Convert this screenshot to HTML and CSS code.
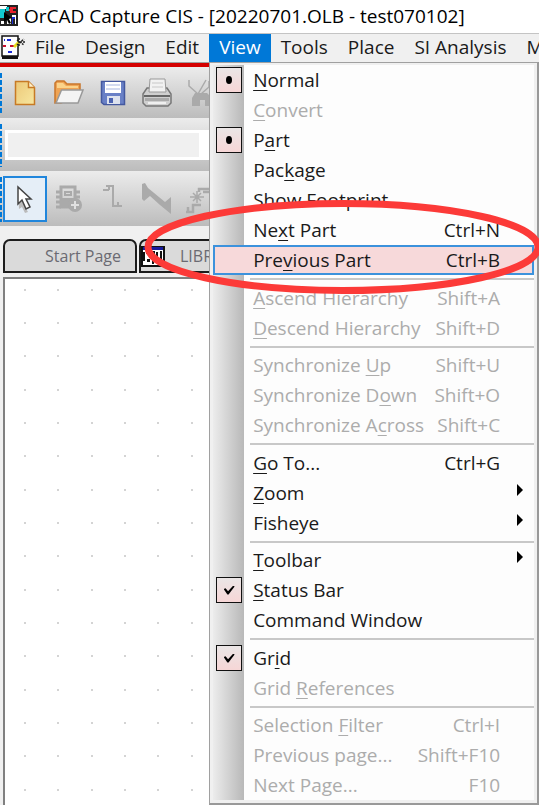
FILE: index.html
```html
<!DOCTYPE html>
<html lang="en">
<head>
<meta charset="utf-8">
<title>OrCAD Capture CIS</title>
<link rel="stylesheet" href="styles.css">
</head>
<body>
<header class="titlebar">
  <svg class="app-icon" width="18" height="21" viewBox="0 0 18 21" aria-hidden="true">
    <path fill="#222" d="M0 0h18v21H0z"/>
    <path fill="#fff" d="M0 1h7v3H0zM7 12h4v7H7zM1 16h3v3H1z"/>
    <path fill="#12c9cf" d="M0 4h5v9H0zM6 2h3v4H6z"/>
    <path fill="#e8222e" d="M10 2h6v2h-3v2h3v2h-6V6h-1V4h1z"/>
    <path fill="#fff" d="M12 10h4v9h-1v-7h-2v7h-1z"/>
    <path fill="#1b2bd6" d="M12 12h3v2h-2v5h-1z"/>
    <path fill="#000" d="M4 7l8 6-3 1 2 4-2 1-2-4-3 2z"/>
  </svg>
  <h1 class="title">OrCAD Capture CIS - [20220701.OLB - test070102]</h1>
</header>

<nav class="menubar">
  <svg class="doc-icon" width="25" height="26" viewBox="0 0 25 26" aria-hidden="true">
    <path fill="#fff" stroke="#111" stroke-width="1.5" d="M2 2h16v20H2z"/>
    <path fill="#111" d="M2 22h16v3H2z"/>
    <path stroke="#1b2bd6" stroke-width="2" d="M7 6h4M8 18h4M4 6h1"/>
    <path stroke="#c8102e" stroke-width="2" d="M3 12h3M10 12h4"/>
    <path stroke="#e8dc20" stroke-width="3" d="M14 13l5-5"/>
    <path stroke="#222" stroke-width="1.5" stroke-dasharray="2 1" d="M19 4v9M17 6l7 5M17 11l7-6M20 8h5"/>
  </svg>
  <button class="menu-title">File</button>
  <button class="menu-title">Design</button>
  <button class="menu-title">Edit</button>
  <div class="menu-anchor">
    <button class="menu-title menu-title-open" aria-expanded="true">View</button>
    <div class="menu">
      <div class="group">
        <label class="item"><input class="mark mark-dot" type="radio" name="shape" checked><span class="name"><u>N</u>ormal</span></label>
        <button class="item" disabled><span class="name"><u>C</u>onvert</span></button>
        <label class="item"><input class="mark mark-dot" type="radio" name="unit" checked><span class="name">P<u>a</u>rt</span></label>
        <button class="item"><span class="name">Pac<u>k</u>age</span></button>
        <button class="item"><span class="name">Show Footprint</span></button>
        <button class="item"><span class="name">Ne<u>x</u>t Part</span><kbd class="keys">Ctrl+N</kbd></button>
        <button class="item item-current"><span class="name">Pre<u>v</u>ious Part</span><kbd class="keys">Ctrl+B</kbd></button>
      </div>
      <div class="group">
        <button class="item" disabled><span class="name"><u>A</u>scend Hierarchy</span><kbd class="keys">Shift+A</kbd></button>
        <button class="item" disabled><span class="name"><u>D</u>escend Hierarchy</span><kbd class="keys">Shift+D</kbd></button>
      </div>
      <div class="group">
        <button class="item" disabled><span class="name">Synchronize <u>U</u>p</span><kbd class="keys">Shift+U</kbd></button>
        <button class="item" disabled><span class="name">Synchronize D<u>o</u>wn</span><kbd class="keys">Shift+O</kbd></button>
        <button class="item" disabled><span class="name">Synchronize A<u>c</u>ross</span><kbd class="keys">Shift+C</kbd></button>
      </div>
      <div class="group">
        <button class="item"><span class="name"><u>G</u>o To...</span><kbd class="keys">Ctrl+G</kbd></button>
        <button class="item item-parent"><span class="name"><u>Z</u>oom</span></button>
        <button class="item item-parent"><span class="name">Fisheye</span></button>
      </div>
      <div class="group">
        <button class="item item-parent"><span class="name"><u>T</u>oolbar</span></button>
        <label class="item"><input class="mark mark-check" type="checkbox" checked><span class="name"><u>S</u>tatus Bar</span></label>
        <button class="item"><span class="name">Command Window</span></button>
      </div>
      <div class="group">
        <label class="item"><input class="mark mark-check" type="checkbox" checked><span class="name">Gr<u>i</u>d</span></label>
        <button class="item" disabled><span class="name">Grid <u>R</u>eferences</span></button>
      </div>
      <div class="group">
        <button class="item" disabled><span class="name">Selection <u>F</u>ilter</span><kbd class="keys">Ctrl+I</kbd></button>
        <button class="item" disabled><span class="name">Previous page...</span><kbd class="keys">Shift+F10</kbd></button>
        <button class="item" disabled><span class="name">Next Page...</span><kbd class="keys">F10</kbd></button>
      </div>
    </div>
  </div>
  <button class="menu-title">Tools</button>
  <button class="menu-title">Place</button>
  <button class="menu-title">SI Analysis</button>
  <button class="menu-title">Macro</button>
</nav>

<div class="toolbar toolbar-file">
  <button class="tool" aria-label="New">
    <svg width="32" height="32" viewBox="0 0 32 32"><defs><linearGradient id="paper" x2="1" y2="1"><stop stop-color="#ecc878"/><stop offset="1" stop-color="#f7e7a0"/></linearGradient></defs><path fill="url(#paper)" stroke="#c77a25" stroke-width="1.5" d="M6.500 4.500h13l6 6v17h-19z"/><path fill="#fff0c8" stroke="#c77a25" stroke-width="1.500" d="M19.500 4.500v6h6"/></svg>
  </button>
  <button class="tool" aria-label="Open">
    <svg width="32" height="32" viewBox="0 0 32 32"><path fill="#efa455" stroke="#c9762a" stroke-width="1.500" d="M2 26V6l2-2h7l3 3h13v10L8 26z"/><path fill="#fbd38a" d="M4 6h6l3 3h12v2H4z"/><path fill="#f4f4f4" stroke="#999" stroke-width="1.500" d="M8.500 13H30l-5 13H3z"/></svg>
  </button>
  <button class="tool" aria-label="Save">
    <svg width="32" height="32" viewBox="0 0 32 32"><path fill="#6980c6" stroke="#44589f" stroke-width="1.500" d="M4.500 4.500h23v23H7l-2.500-2z"/><path fill="#fff" d="M8 5h16v11H8z"/><path fill="#d3daf0" d="M9 7h14v2H9zM9 11h14v2H9z"/><path fill="#dde2ee" d="M10 19h13v8H10z"/><path fill="#4b62b0" d="M12 21h4v5h-4z"/></svg>
  </button>
  <button class="tool" aria-label="Print">
    <svg width="34" height="32" viewBox="0 0 34 32"><path fill="#cfcfcf" stroke="#777" stroke-width="1.500" d="M3 17l4-6h20l4 6v9l-3 3H6l-3-3z"/><path fill="#f2f2f2" stroke="#999" d="M10 2h15l1 13H9z"/><path fill="#ddd" d="M12 5h11v2H12zM12 9h11v2H12z"/><path fill="none" stroke="#666" stroke-width="2" d="M4 19h26"/><path fill="#aaa" d="M5 21h24v3H5z"/><path fill="#f0f0f0" d="M8 25h18v2H8z"/></svg>
  </button>
  <button class="tool" aria-label="Cut">
    <svg width="32" height="32" viewBox="0 0 32 32"><path fill="none" stroke="#aaa" stroke-width="1.500" d="M4 3v6l9 8M21 3l-8 14M24 4v6l-8 7"/><path fill="#aaa" d="M10 16h12l5 5v8h-7v-6h-5v6H7v-8z"/></svg>
  </button>
</div>

<div class="toolbar toolbar-search">
  <div class="combo"><input class="combo-field" type="text" aria-label="Part name"></div>
</div>

<div class="toolbar toolbar-draw">
  <button class="tool tool-active" aria-label="Select">
    <svg width="32" height="32" viewBox="0 0 32 32"><path fill="#bbb" d="M9 8l12 15-5 1 3 5-3 1-3-6-3 2z"/><path fill="#fff" stroke="#444" stroke-width="1.500" d="M9 4v17l4-4 4 9 4-2-4-8h5z"/></svg>
  </button>
  <button class="tool" aria-label="Place part">
    <svg width="32" height="32" viewBox="0 0 32 32"><g fill="none" stroke="#aaa"><path stroke-width="3" d="M8 4h14v20H8z"/><path stroke-width="3" d="M3 9h5M3 14h5M3 19h5M3 24h5M22 9h5M22 14h5"/><path stroke-width="2" d="M12 9h6v3h-6z"/></g><path fill="#aaa" d="M8 15h14v9H8z"/><circle cx="22" cy="22" r="7" fill="#aaa"/><path stroke="#e0e0e0" stroke-width="2" d="M22 18v8M18 22h8"/></svg>
  </button>
  <button class="tool" aria-label="Place wire">
    <svg width="32" height="32" viewBox="0 0 32 32"><path fill="none" stroke="#aaa" stroke-width="2" d="M6 7h6M12 3v4M9 3h7v20h9M21 19v5"/></svg>
  </button>
  <button class="tool" aria-label="Place net group">
    <svg width="32" height="32" viewBox="0 0 32 32"><path fill="#aaa" d="M1 1l3-1 3 5 17 14 6-5v17L19 22 9 13l-6 5-2-2z"/></svg>
  </button>
  <button class="tool" aria-label="Auto connect">
    <svg width="32" height="32" viewBox="0 0 32 32"><path fill="none" stroke="#aaa" stroke-width="2.500" d="M1 29h7v-7h8M3 29v-5M14 9V6h12M18 9h8"/><path fill="none" stroke="#aaa" stroke-width="1.500" d="M5 14h14M8 10l8 8M16 10l-8 8M12 8v12"/></svg>
  </button>
</div>

<main class="workspace">
  <div class="tabs">
    <button class="tab">Start Page</button>
    <button class="tab tab-doc">
      <svg width="24" height="21" viewBox="0 0 24 21" aria-hidden="true"><path fill="#fff" stroke="#111" stroke-width="2" d="M1 1h22v19H1z"/><path fill="#151a9c" d="M2 1h20v3H2z"/><path fill="#111" d="M5 5h9v3h-3v3H9V8H5zM2 6h2v9H2zM15 6h2v5h-2zM19 5h2v9h-2zM6 13h3v3H6zM11 13h2v5h-2z"/></svg>
      LIBRARY
    </button>
  </div>
  <div class="canvas">
    <svg class="grid" aria-hidden="true">
      <defs>
        <pattern id="dots" width="100" height="100" patternUnits="userSpaceOnUse">
          <path fill="#d4d4d4" d="M19 10h2v2h-2zM52 10h2v2h-2zM86 10h2v2h-2zM19 43h2v2h-2zM52 43h2v2h-2zM86 43h2v2h-2zM19 76h2v2h-2zM52 76h2v2h-2zM86 76h2v2h-2z"/>
        </pattern>
      </defs>
      <rect width="100%" height="100%" fill="url(#dots)"/>
    </svg>
  </div>
</main>

<svg class="callout" width="397" height="96" viewBox="0 0 397 96" aria-hidden="true">
  <ellipse cx="201" cy="48" rx="195" ry="43.500" fill="none" stroke="#fc3a38" stroke-width="7"/>
</svg>
</body>
</html>
```
FILE: styles.css
```css
* {
  box-sizing: border-box;
}

body {
  margin: 0;
  height: 100vh;
  display: flex;
  flex-direction: column;
  position: relative;
  overflow: hidden;
  background: #f0f0f0;
  color: #1a1a1a;
  font-family: "Open Sans", "Noto Sans", sans-serif;
  font-size: 19px;
}

button {
  font: inherit;
  color: inherit;
  background: none;
  border: 0;
  margin: 0;
  padding: 0;
}

.titlebar {
  flex: none;
  display: flex;
  align-items: center;
  gap: 6px;
  height: 33px;
  padding-bottom: 2px;
  background: #fff;
}

.title {
  margin: 0;
  color: #000;
  font-size: 19px;
  font-weight: 400;
  white-space: nowrap;
}

.menubar {
  flex: none;
  display: flex;
  height: 30px;
  border-top: 1px solid #c4c4c4;
  border-bottom: 1px solid #a0a0a0;
  white-space: nowrap;
}

.doc-icon {
  flex: none;
}

.menu-title {
  flex: none;
  height: 28px;
  padding: 0 10px 3px;
}

.menu-anchor {
  position: relative;
  flex: none;
}

.menu-title-open {
  background: #0078d7;
  color: #fff;
}

.menu {
  position: absolute;
  z-index: 2;
  top: 28px;
  left: 0;
  width: 330px;
  padding: 2px 3px 3px;
  border: 1px solid #a0a0a0;
  border-right: 2px solid #999;
  border-bottom: 2px solid #999;
  background: #f0f0f0;
}

.group {
  position: relative;
  background: linear-gradient(to right, #ececec, #b8b8b8 31px, #fdfdfd 31px);
}

.group + .group {
  padding-top: 8px;
}

.group:nth-child(odd) {
  padding-top: 7px;
}

.group:first-child {
  padding-top: 0;
}

.group + .group::before {
  content: "";
  position: absolute;
  top: 3px;
  left: 37px;
  right: 0;
  height: 2px;
  background: #c8c8c8;
}

.item {
  display: flex;
  align-items: center;
  position: relative;
  width: 100%;
  height: 30px;
  padding: 0 34px 0 40px;
  text-align: left;
}

.item:disabled {
  color: #acacac;
}

.item-current {
  background: #f7d9da;
  box-shadow: inset 0 0 0 2px #3c92dc;
}

.name {
  flex: 1;
}

.name u {
  text-underline-offset: 3px;
  text-decoration-thickness: 1px;
}

.keys {
  font: inherit;
}

.item-parent::after {
  content: "";
  position: absolute;
  right: 11px;
  top: 6px;
  border: 6px solid transparent;
  border-left-color: #000;
  border-right: 0;
}

.mark {
  appearance: none;
  position: absolute;
  left: 3px;
  top: 2px;
  display: grid;
  place-items: center;
  width: 26px;
  height: 26px;
  margin: 0;
  border: 1px solid #111;
  background: linear-gradient(#eae6e6, #f6d6d6);
}

.mark::before {
  content: "";
  background: #000;
}

.mark-dot::before {
  width: 6px;
  height: 8px;
  border-radius: 50%;
}

.mark-check::before {
  width: 11px;
  height: 9px;
  clip-path: polygon(0 40%, 18% 30%, 40% 65%, 88% 0, 100% 12%, 45% 100%, 34% 100%);
}

.toolbar {
  flex: none;
  position: relative;
  display: flex;
  align-items: center;
  background: linear-gradient(#ececec, #bcbcbc);
}

.toolbar::before {
  content: "";
  position: absolute;
  left: 0;
  top: 6px;
  bottom: 4px;
  width: 2px;
  background: repeating-linear-gradient(#0078d7 0, #0078d7 5px, transparent 5px, transparent 7px);
}

.toolbar-file {
  height: 55px;
  padding-left: 3px;
  border-top: 4px solid #d40000;
}

.toolbar-search {
  height: 53px;
  padding-left: 5px;
}

.toolbar-draw {
  height: 55px;
  padding-left: 3px;
}

.tool {
  flex: none;
  display: grid;
  place-items: center;
  width: 44px;
  height: 46px;
}

.tool-active {
  background: #e5eef7;
  border: 2px solid #2086dc;
}

.combo {
  flex: 1;
  height: 30px;
  padding: 3px;
  background: #fff;
}

.combo-field {
  display: block;
  width: 191px;
  height: 24px;
  border: 0;
  background: #f0f0f0;
}

.workspace {
  flex: 1;
  min-height: 0;
  display: flex;
  flex-direction: column;
  padding: 13px 0 0 3px;
}

.tabs {
  flex: none;
  display: flex;
  gap: 2px;
  height: 38px;
}

.tab {
  width: 134px;
  height: 34px;
  border: 2px solid #1c1c1c;
  border-radius: 7px 7px 0 0;
  background: #dadada;
  color: #6a6a72;
  padding: 0 14px 0 0;
  text-align: right;
  font-size: 16px;
  white-space: nowrap;
}

.tab-doc {
  display: flex;
  align-items: center;
  gap: 15px;
  padding: 0;
}

.canvas {
  flex: 1;
  min-height: 0;
  overflow: hidden;
  border: 2px solid #808080;
  border-right: 0;
  border-bottom: 0;
  background: #fff;
}

.grid {
  display: block;
  width: 100%;
  height: 100vh;
}

.callout {
  position: absolute;
  z-index: 3;
  left: 142px;
  top: 199px;
}
```
